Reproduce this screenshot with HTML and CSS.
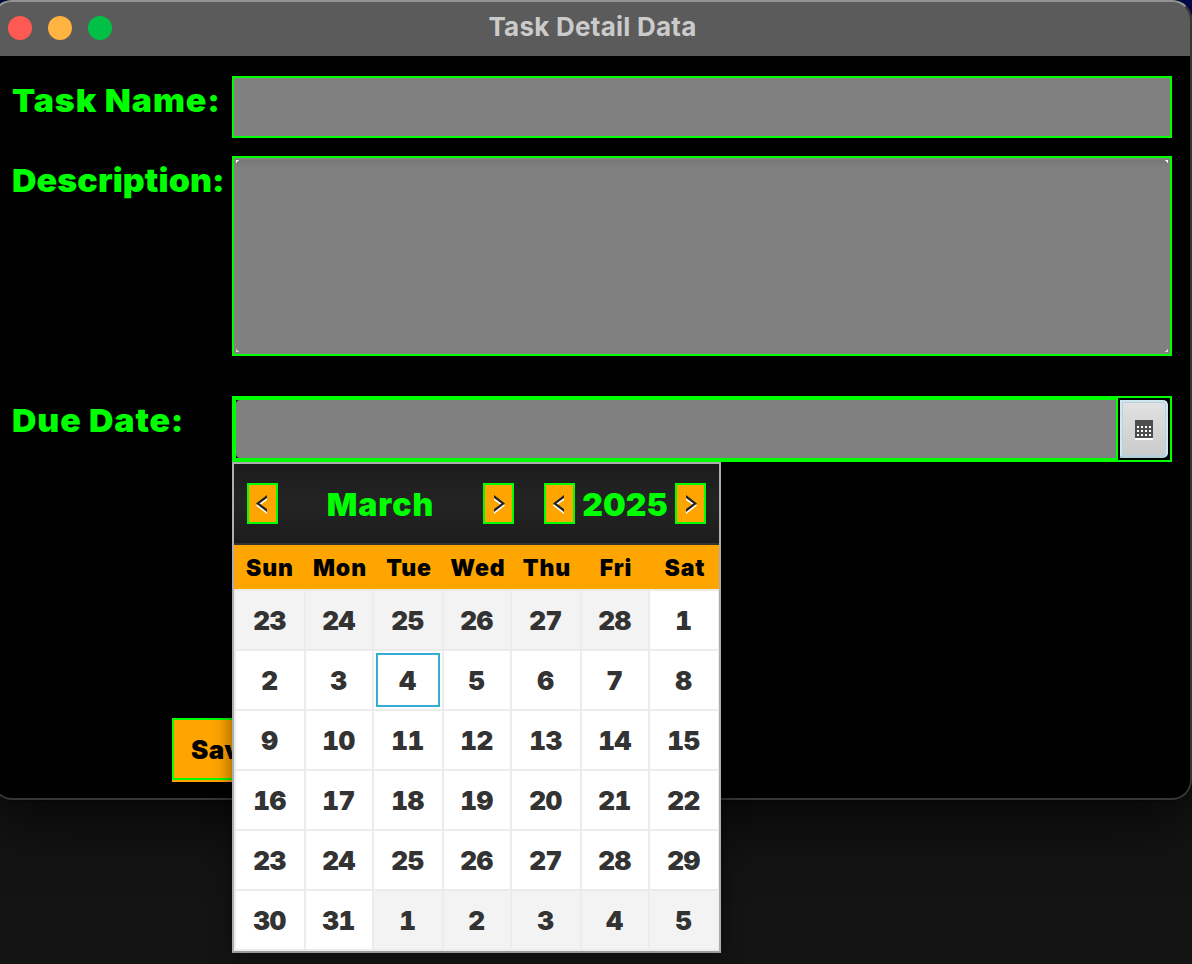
FILE: index.html
```html
<!DOCTYPE html>
<html lang="en">
<head>
<meta charset="utf-8">
<title>Task Detail Data</title>
<link rel="stylesheet" href="styles.css">
</head>
<body>
<main class="window">
  <header class="titlebar">
    <div class="lights"><i class="light close"></i><i class="light minimize"></i><i class="light expand"></i></div>
    <h1 class="title">Task Detail Data</h1>
  </header>
  <form class="form">
    <label class="label name-label">Task Name:</label>
    <div class="field"></div>
    <label class="label desc-label">Description:</label>
    <div class="field desc"><div class="area"></div></div>
    <label class="label due-label">Due Date:</label>
    <div class="date-picker">
      <div class="date-input"><div class="date-value"></div></div>
      <button type="button" class="date-button" aria-label="Open calendar">
        <svg width="18" height="20" viewBox="0 0 18 20" shape-rendering="crispEdges"><path fill="#fff" d="M0 18h18v2H0z"/><path fill="#4d4d4d" d="M0 0h18v18H0z"/><path fill="#fff" d="M2 6h2v2H2zm4 0h2v2H6zm4 0h2v2h-2zm4 0h2v2h-2zM2 10h2v2H2zm4 0h2v2H6zm4 0h2v2h-2zm4 0h2v2h-2zM2 14h2v2H2zm4 0h2v2H6zm4 0h2v2h-2zm4 0h2v2h-2z"/></svg>
      </button>
      <section class="calendar">
        <div class="cal-head">
          <button type="button" class="nav"><svg width="27" height="37" viewBox="0 0 27 37"><path class="lo" d="M7 20.500 18 12v3l-7.500 5.500L18 26v3z"/><path class="hi" d="M7 18.500 18 10v3l-7.500 5.500L18 24v3z"/></svg></button>
          <span class="month">March</span>
          <button type="button" class="nav"><svg width="27" height="37" viewBox="0 0 27 37"><path class="lo" d="M20 20.500 9 12v3l7.500 5.500L9 26v3z"/><path class="hi" d="M20 18.500 9 10v3l7.500 5.500L9 24v3z"/></svg></button>
          <button type="button" class="nav year-prev"><svg width="27" height="37" viewBox="0 0 27 37"><path class="lo" d="M7 20.500 18 12v3l-7.500 5.500L18 26v3z"/><path class="hi" d="M7 18.500 18 10v3l-7.500 5.500L18 24v3z"/></svg></button>
          <span class="year">2025</span>
          <button type="button" class="nav"><svg width="27" height="37" viewBox="0 0 27 37"><path class="lo" d="M20 20.500 9 12v3l7.500 5.500L9 26v3z"/><path class="hi" d="M20 18.500 9 10v3l7.500 5.500L9 24v3z"/></svg></button>
        </div>
        <div class="week"><span>Sun</span><span>Mon</span><span>Tue</span><span>Wed</span><span>Thu</span><span>Fri</span><span>Sat</span></div>
        <div class="days">
          <span class="out">23</span><span class="out">24</span><span class="out">25</span><span class="out">26</span><span class="out">27</span><span class="out">28</span><span>1</span>
          <span>2</span><span>3</span><span class="today">4</span><span>5</span><span>6</span><span>7</span><span>8</span>
          <span>9</span><span>10</span><span>11</span><span>12</span><span>13</span><span>14</span><span>15</span>
          <span>16</span><span>17</span><span>18</span><span>19</span><span>20</span><span>21</span><span>22</span>
          <span>23</span><span>24</span><span>25</span><span>26</span><span>27</span><span>28</span><span>29</span>
          <span>30</span><span>31</span><span class="out">1</span><span class="out">2</span><span class="out">3</span><span class="out">4</span><span class="out">5</span>
        </div>
      </section>
    </div>
  </form>
  <div class="actions"><button type="button" class="save">Save</button></div>
</main>
</body>
</html>
```
FILE: styles.css
```css
* { box-sizing: border-box; }
body {
  margin: 0;
  height: 964px;
  overflow: hidden;
  background: linear-gradient(#000a55 0 60px, #141414 200px);
  font-family: Inter, "Liberation Sans", sans-serif;
  font-weight: 900;
}
button { font: inherit; padding: 0; margin: 0; border: 0; }
svg { display: block; }
.window {
  position: relative;
  width: 1200px;
  height: 800px;
  margin-left: -8px;
  padding-left: 8px;
  border-radius: 20px;
  background: linear-gradient(#5b5b5b 56px, #000 56px);
  box-shadow: 0 18px 70px rgba(0, 0, 0, 0.8), 0 0 2px #000;
}
.window::after {
  content: "";
  position: absolute;
  inset: 0;
  border: 2px solid #353535;
  border-top-color: #929292;
  border-radius: 20px;
  pointer-events: none;
}
.titlebar {
  height: 56px;
  display: grid;
  grid-template-columns: 112px 1fr 119px;
  align-items: center;
}
.lights { display: flex; gap: 16px; padding-left: 8px; }
.light { flex: none; width: 24px; height: 24px; border-radius: 50%; }
.close { background: #ff5953; }
.minimize { background: #ffb340; }
.expand { background: #00c146; }
.title {
  margin: 0;
  padding-bottom: 3px;
  text-align: center;
  font-size: 26px;
  font-weight: 700;
  letter-spacing: 0.25px;
  color: #cbcbcb;
}
.form {
  display: grid;
  grid-template-columns: 220px 940px;
  grid-template-rows: 62px 200px 88px;
  row-gap: 18px;
  padding: 20px 0 0 12px;
}
.label {
  justify-self: start;
  font-size: 32px;
  line-height: 50px;
  white-space: nowrap;
  color: #0f0;
  transform: scaleX(1.06);
  transform-origin: left;
}
.name-label { letter-spacing: 0.85px; }
.desc-label { letter-spacing: 0.1px; }
.due-label { letter-spacing: 0.75px; }
.due-label, .date-picker { margin-top: 22px; }
.field { border: 2px solid #0f0; background: #808080; }
.desc {
  padding: 2px;
  background:
    linear-gradient(#fff, #fff) 2px 2px / 3px 3px no-repeat,
    linear-gradient(#fff, #fff) calc(100% - 2px) 2px / 3px 3px no-repeat,
    linear-gradient(#ddd, #ddd) 2px calc(100% - 2px) / 3px 3px no-repeat,
    linear-gradient(#ddd, #ddd) calc(100% - 2px) calc(100% - 2px) / 3px 3px no-repeat,
    #808080;
}
.area {
  height: 100%;
  border-radius: 5px;
  background: linear-gradient(#777, #808080 8px);
}
.date-picker {
  position: relative;
  height: 66px;
  display: flex;
  gap: 2px;
  border: 2px solid #0f0;
}
.date-input {
  width: 884px;
  border: 2px solid #0f0;
  background: #000;
}
.date-value { height: 100%; border-radius: 4px 0 0 4px; background: #808080; }
.date-button {
  width: 48px;
  height: 58px;
  margin-top: 2px;
  padding-top: 2px;
  display: grid;
  place-items: center;
  border: 2px solid #cfe7ef;
  border-bottom-color: #b5cfd8;
  border-radius: 0 5px 5px 0;
  background: linear-gradient(#e2e2e2, #cbcbcb);
  box-shadow: inset 0 0 0 1px #b8d2dc;
}
.calendar {
  position: absolute;
  z-index: 2;
  top: 64px;
  left: -2px;
  width: 489px;
  height: 491px;
  border: 2px solid #aeaeae;
  border-bottom-color: #999;
  background: #ececec;
  box-shadow: 0 2px 18px rgba(0, 0, 0, 0.5);
  clip-path: inset(0 -30px -30px -30px);
}
.cal-head {
  height: 81px;
  display: flex;
  align-items: center;
  padding: 0 13px;
  border-bottom: 2px solid #333;
  background: linear-gradient(#1c1c1c, #242424 50%, #1c1c1c);
  color: #0f0;
  font-size: 32px;
  line-height: 40px;
}
.nav {
  flex: none;
  width: 31px;
  height: 41px;
  border: 2px solid #0f0;
  background: orange;
}
.nav .hi { fill: #222; }
.nav .lo { fill: #fff; }
.month, .year { padding-top: 2px; text-align: center; }
.month { width: 205px; letter-spacing: 1px; }
.year-prev { margin-left: 30px; }
.year { width: 100px; }
.week {
  height: 44px;
  padding-top: 2px;
  display: grid;
  grid-template-columns: 72px 68px 70px 68px 70px 68px 70px;
  align-items: center;
  background: orange;
  color: #000;
  text-align: center;
  font-size: 23px;
  letter-spacing: 0.9px;
}
.days {
  display: grid;
  grid-template-columns: 68px 66px 68px 66px 68px 66px 68px;
  grid-auto-rows: 58px;
  gap: 2px;
  padding: 2px 1px 2px 2px;
  color: #333;
  font-size: 26px;
  font-variant-numeric: tabular-nums;
  letter-spacing: -0.4px;
}
.days span {
  display: grid;
  place-items: center;
  padding-right: 1px;
  background: #fff;
}
.days .out { background: #f3f3f3; }
.days .today {
  border: 2px solid #34acd3;
  outline: 2px solid #fff;
  margin: 2px;
}
.actions { display: flex; padding: 256px 0 0 172px; }
.save {
  width: 100px;
  height: 62px;
  padding-left: 17px;
  text-align: left;
  font-size: 26px;
  letter-spacing: 0.5px;
  color: #000;
  border: 2px solid #0f0;
  background: orange;
  box-shadow: 0 2px 0 orange;
}
```
